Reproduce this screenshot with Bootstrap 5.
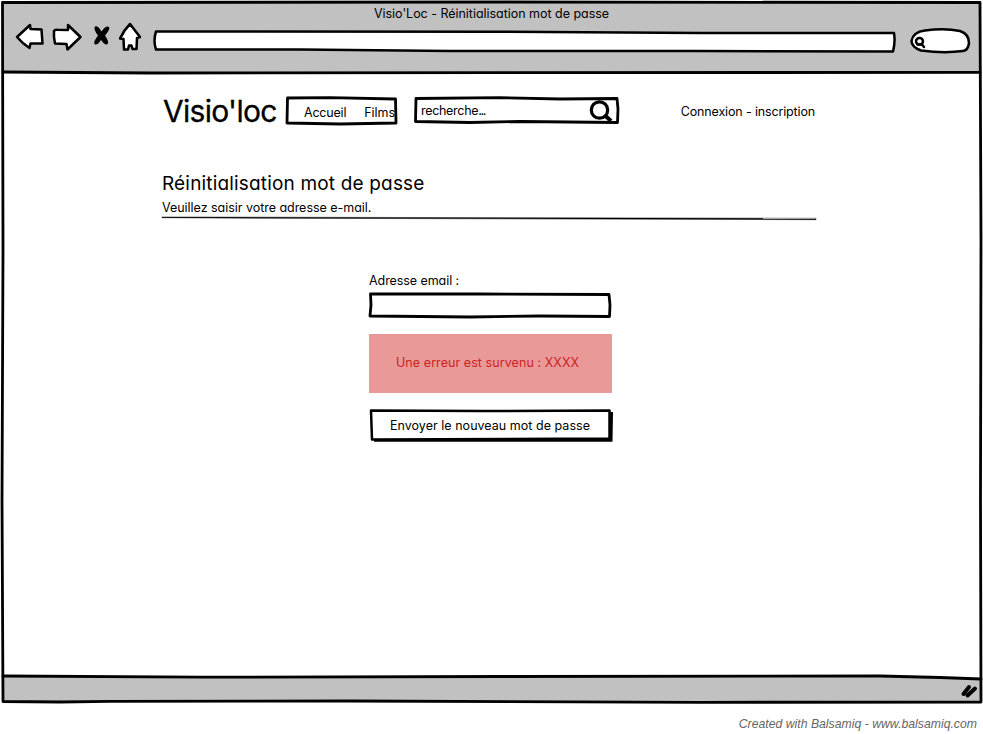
<!DOCTYPE html>
<html lang="fr">
<head>
<meta charset="utf-8">
<meta name="viewport" content="width=device-width, initial-scale=1">
<title>Visio'Loc - Réinitialisation mot de passe</title>
<link href="https://cdn.jsdelivr.net/npm/bootstrap@5.3.0/dist/css/bootstrap.min.css" rel="stylesheet">
<style>
body{font-family:Inter,Lato,sans-serif;font-feature-settings:"cv11","ss03";font-size:12.5px;line-height:16px;color:#000;background:#fff;overflow:hidden}
svg{display:block;overflow:visible}
.ink{fill:none;stroke:#000;stroke-width:2.8px;stroke-linejoin:round;stroke-linecap:round}
.thin{stroke-width:2.5px}
.paper{fill:#fff}
.sketch{position:absolute;left:0;top:0;z-index:0}
.sketch ~ *{position:relative;z-index:1}
.win{width:983px;height:704px}
.chrome{height:73px;padding-top:6px}
.tools{height:49px;padding-left:15px;margin-top:-1px}
.page-area{height:604px;padding:23px 168px 0 162px}
.topnav{height:37px}
.brand{font-size:30px;line-height:31px;width:124px;letter-spacing:-.7px;padding-left:1px;-webkit-text-stroke:.3px #000}
.menu{width:111px;height:29px;padding:9px 0 0 18px;gap:18px}
.menu a,.account a{color:#000;text-decoration:none}
.finder{width:206px;height:28px;margin-left:17px;padding:6px 8px 0 7px}
.account{padding-top:8px}
.heading{font-size:19px;line-height:24px;margin:39px 0 0;font-weight:400}
.intro{padding-top:4px;height:21px}
.form-col{width:243px;margin:52px 0 0 207px}
.field{width:243px;height:26px;margin-top:3px}
.field input{width:100%;height:100%;border:0;background:transparent;outline:0}
.oops{height:59px;margin-top:16px;background:#ea9999;color:#cc2222;border:0;border-radius:0;padding:21px 0 0 27px}
.send{width:244px;height:33px;margin-top:16px;border:0;background:none;padding:0 0 0 21px;color:#000;text-align:left}
.credit{font:italic 12.25px/16px "Liberation Sans",Arial,sans-serif;color:#666;padding:12px 6px 0 0}
.t{display:inline-block;white-space:nowrap}
.t-title{letter-spacing:-.03px}
.t-acc{letter-spacing:-.2px}
.t-films{letter-spacing:-.05px}
.t-rech{letter-spacing:-.3px;padding-top:1px}
.dots{letter-spacing:-1.3px}
.t-con{letter-spacing:-.15px}
.t-head{letter-spacing:.17px}
.t-veu{letter-spacing:-.03px}
.t-adr{letter-spacing:-.07px}
.t-err{letter-spacing:.07px}
.t-env{letter-spacing:.03px}
</style>
<script src="https://cdn.jsdelivr.net/npm/bootstrap@5.3.0/dist/js/bootstrap.bundle.min.js"></script>
</head>
<body>
<div class="win position-relative">
  <svg class="sketch" width="983" height="704" aria-hidden="true">
    <path fill="#c1c1c1" d="M3 2H981V72L500 73L3 72ZM3 677L350 677.500L880 676L981 679V701L500 701L3 702Z"/>
    <path class="ink" d="M3 2.500L500 2L980 2.500L981 240L980.500 500L981 702L700 702.300L350 701L110 701.300L60 702L3 701.500L2 500L3 250L2.500 2.500"/>
    <path class="ink" d="M3 72L150 73L500 72.700L980 72.300M3 676L200 677.200L500 676.500L880 676L940 677.500L981 679"/>
  </svg>
  <header class="chrome">
    <div class="text-center"><span class="t t-title">Visio'Loc - Réinitialisation mot de passe</span></div>
    <div class="tools d-flex align-items-start">
      <svg width="138" height="34" viewBox="15 21 138 34">
        <path class="ink paper thin" d="M17 37L30 25L30.500 29L41.500 29.500L42.500 43.500L30.500 43.500L29.500 48Q22 43 17 37Z"/>
        <path class="ink paper thin" d="M54 31Q55 29.500 57 29.800L68 30L68 25L80.500 37L67.500 49.500L66.500 44L55 43.500Q53.500 37 54 31Z"/>
        <path d="M95 26.500Q98 25.500 101.500 31.500Q106 25 109 27Q110.500 29 105 35.500Q109.500 42 107.500 44Q105.500 46 101 40Q97 46 94.500 44Q93 42 98 35.500Q93 29 95 26.500Z"/>
        <path class="ink paper thin" d="M130 24L140 37L137 38L136.500 49L132.500 49L131.500 45.500L129 45.500L128 49.500L124 49.500L123.500 39L120 38.500Q124 30 130 24Z"/>
      </svg>
      <svg width="743" height="34" viewBox="153 21 743 34">
        <path class="ink paper thin" d="M156 31.500L500 31.700L700 33L894 33Q895.500 42 893 51.500L700 51L450 51L300 49.500L156 49.500Q153 41 156 31.500Z"/>
      </svg>
      <svg class="flex-shrink-0" width="73" height="34" viewBox="896 21 73 34">
        <path class="ink paper thin" d="M925 30.500Q945 28 960 31Q969 34 969 43Q968 50.500 963 51Q944 53.500 921 50.500Q911.500 47 911.500 41Q913 32 925 30.500Z"/>
        <ellipse class="ink thin" cx="919.500" cy="41.300" rx="3.500" ry="3.200"/><path class="ink thin" d="M917.500 44.500L922 44.500L924 47"/>
      </svg>
    </div>
  </header>
  <main class="page-area">
    <nav class="topnav d-flex align-items-start">
      <div class="brand text-nowrap">Visio'loc</div>
      <div class="menu position-relative d-flex">
        <svg class="sketch" width="111" height="29" viewBox="286 97 111 29"><path class="ink" d="M287.500 99L330 98.700L395.500 100L396 124L340 125L287 124Z"/></svg>
        <a class="t t-acc" href="#">Accueil</a><a class="t t-films" href="#">Films</a>
      </div>
      <div class="finder position-relative d-flex justify-content-between">
        <svg class="sketch" width="206" height="28" viewBox="414 97 206 28"><path class="ink" d="M416 99.500L500 98.700L560 100L617 99.500L618 110L617.500 123.500L520 122.500L470 123.500L415.500 122.500Z"/></svg>
        <span class="t t-rech">recherche<span class="dots">...</span></span>
        <svg width="23" height="22" viewBox="589 103 23 22"><circle cx="599.500" cy="111" r="8.200" fill="none" stroke="#000" stroke-width="3.200"/><path d="M605 116.500L611 122" stroke="#000" stroke-width="4"/></svg>
      </div>
      <div class="account ms-auto"><a class="t t-con" href="#">Connexion - inscription</a></div>
    </nav>
    <h1 class="heading"><span class="t t-head">Réinitialisation mot de passe</span></h1>
    <div class="intro"><span class="t t-veu">Veuillez saisir votre adresse e-mail.</span></div>
    <svg width="654" height="4"><path d="M0 .7L100 1.200L654 2.700V1.300L0 0Z" stroke="#000" stroke-width=".5"/></svg>
    <form class="form-col">
      <label class="t t-adr d-block" for="mail">Adresse email :</label>
      <div class="field position-relative">
        <svg class="sketch" width="243" height="26" viewBox="369 292 243 26"><path class="ink" d="M370.500 294L480 294L609 294.500L610 305L609.500 316.500L540 316L470 317L370 316L371 305Z"/></svg>
        <input id="mail" type="email">
      </div>
      <div class="oops alert mb-0" role="alert"><span class="t t-err">Une erreur est survenu : XXXX</span></div>
      <button class="send position-relative d-block" type="button">
        <svg class="sketch" width="244" height="33" viewBox="369 409 244 33"><path d="M374 439L610 438L610 412L613 412L612.500 441.800L374 441.800Z"/><path class="ink paper thin" d="M371 410.500L480 411L609.500 410.500L609.500 438.500L372 439.500Z"/></svg>
        <span class="t t-env">Envoyer le nouveau mot de passe</span>
      </button>
    </form>
  </main>
  <svg class="grip" width="983" height="27" viewBox="0 677 983 27"><path d="M963.500 694L969 687M967.500 695.500L975 688.500" stroke="#000" stroke-width="4" stroke-linecap="round"/></svg>
</div>
<footer class="credit text-end"><span class="t t-cred">Created with Balsamiq - www.balsamiq.com</span></footer>
</body>
</html>
